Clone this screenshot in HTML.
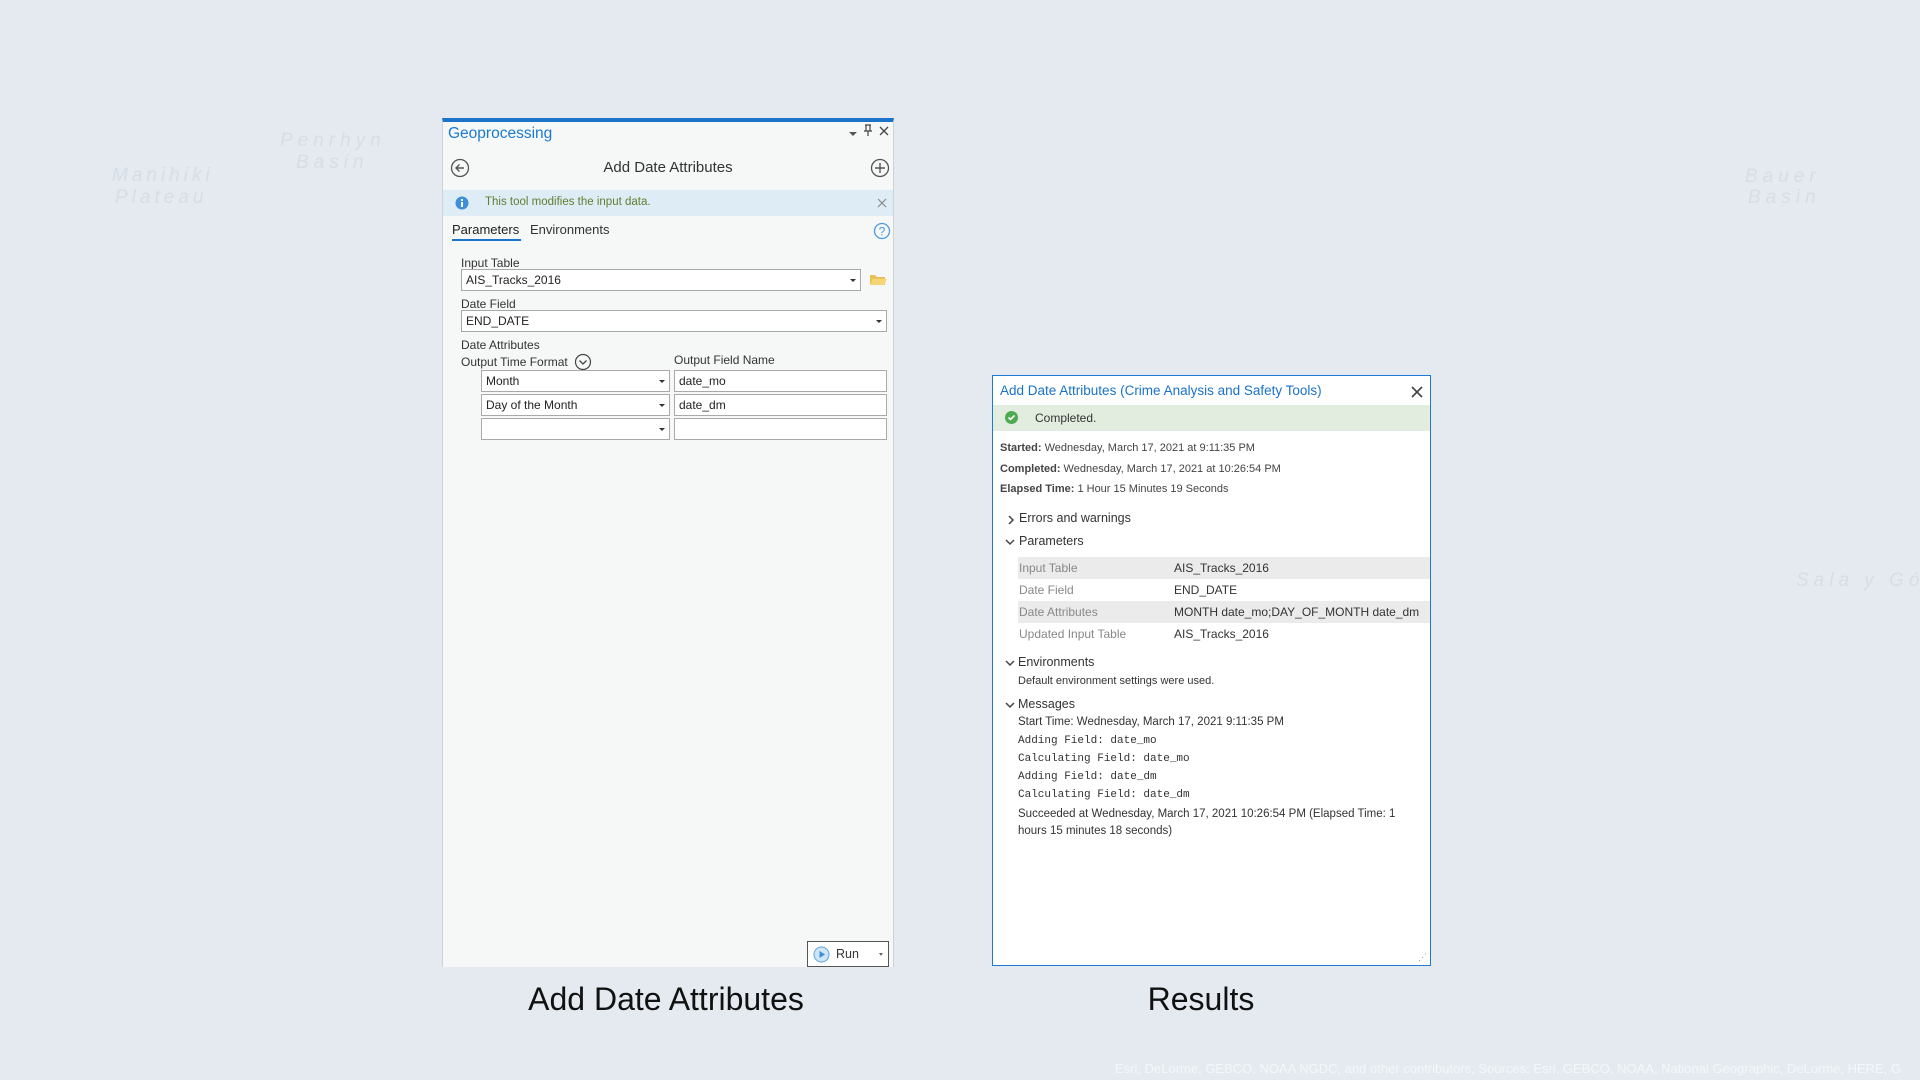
<!DOCTYPE html>
<html><head><meta charset="utf-8"><style>
*{margin:0;padding:0;box-sizing:border-box}
body{width:1920px;height:1080px;overflow:hidden;background:#e4eaf0;font-family:"Liberation Sans",sans-serif;position:relative;color:#222}
.a{position:absolute;white-space:nowrap}
.lp{position:absolute;left:442px;top:118px;width:452px;height:849px;background:#f6f7f7;border-top:4px solid #1c74c8;border-left:1px solid #cfd3d6;border-right:1px solid #cfd3d6}
.rp{position:absolute;left:992px;top:375px;width:439px;height:591px;background:#fff;border:1px solid #1c7ad0}
.box{position:absolute;background:#fff;border:1px solid #a9a9a9;font-size:12px;padding:3px 4px;color:#222}
.dd{position:absolute;right:4px;top:9px;border-left:3px solid transparent;border-right:3px solid transparent;border-top:3px solid #333}
.s{font-size:11px;color:#444}
.tb{position:absolute;left:1018px;width:412px;height:22px;font-size:12px;color:#888;padding:4px 0 0 1px}
.tb span{position:absolute;left:156px;color:#333}
.mono{font-family:"Liberation Mono",monospace;font-size:11px;color:#333}
.h{font-size:12.5px;color:#333}
.m{color:#d6dde5;font-size:19px;font-style:italic}
</style></head><body>
<div class="a m" style="left:280px;top:130px;letter-spacing:5px">Penrhyn</div>
<div class="a m" style="left:296px;top:152px;letter-spacing:5px">Basin</div>
<div class="a m" style="left:112px;top:165px;letter-spacing:4px">Manihiki</div>
<div class="a m" style="left:115px;top:187px;letter-spacing:4px">Plateau</div>
<div class="a m" style="left:1745px;top:166px;letter-spacing:5px">Bauer</div>
<div class="a m" style="left:1748px;top:187px;letter-spacing:5px">Basin</div>
<div class="a m" style="left:1796px;top:570px;letter-spacing:5px">Sala y Gó</div>

<div class="lp">
 <div class="a" style="left:5px;top:3px;font-size:15.5px;color:#1a7bd0">Geoprocessing</div>
 <div class="a" style="left:406px;top:10px;border-left:4px solid transparent;border-right:4px solid transparent;border-top:4px solid #555"></div>
 <svg class="a" style="left:420px;top:2px" width="10" height="12"><path d="M2 1h6M3 1v6M7 1v6M1 7h8M5 7v5" stroke="#444" stroke-width="1.2" fill="none"/></svg>
 <svg class="a" style="left:436px;top:4px" width="10" height="10"><path d="M1 1L9 9M9 1L1 9" stroke="#444" stroke-width="1.3"/></svg>
 <svg class="a" style="left:7px;top:36px" width="20" height="20"><circle cx="10" cy="10" r="8.5" fill="none" stroke="#555" stroke-width="1.3"/><path d="M14 10H6M9.5 6.5L6 10l3.5 3.5" fill="none" stroke="#555" stroke-width="1.4"/></svg>
 <div class="a" style="left:0;width:450px;text-align:center;top:37px;font-size:15px;color:#333">Add Date Attributes</div>
 <svg class="a" style="left:427px;top:36px" width="20" height="20"><circle cx="10" cy="10" r="8.5" fill="none" stroke="#555" stroke-width="1.3"/><path d="M10 5v10M5 10h10" stroke="#555" stroke-width="1.4"/></svg>
 <div class="a" style="left:0;top:68px;width:450px;height:26px;background:#deecf6"></div>
 <svg class="a" style="left:12px;top:74px" width="14" height="14"><circle cx="7" cy="7" r="6.5" fill="#3f8fd8"/><rect x="6" y="6" width="2" height="5" fill="#fff"/><rect x="6" y="3" width="2" height="2" fill="#fff"/></svg>
 <div class="a" style="left:42px;top:74px;font-size:11.5px;color:#5f7f2f">This tool modifies the input data.</div>
 <svg class="a" style="left:434px;top:76px" width="10" height="10"><path d="M1 1L9 9M9 1L1 9" stroke="#888" stroke-width="1.2"/></svg>
 <div class="a" style="left:9px;top:100px;font-size:13px;color:#222">Parameters</div>
 <div class="a" style="left:9px;top:117px;width:69px;height:2px;background:#1c74c8"></div>
 <div class="a" style="left:87px;top:100px;font-size:13px;color:#333">Environments</div>
 <svg class="a" style="left:430px;top:100px" width="18" height="18"><circle cx="9" cy="9" r="7.5" fill="none" stroke="#4a9be0" stroke-width="1.3"/><text x="9" y="13.5" font-size="12" text-anchor="middle" fill="#4a9be0" font-family="Liberation Sans">?</text></svg>
 <div class="a" style="left:18px;top:134px;font-size:12px;color:#333">Input Table</div>
 <div class="box" style="left:18px;top:147px;width:400px;height:22px">AIS_Tracks_2016<div class="dd"></div></div>
 <svg class="a" style="left:426px;top:150px" width="18" height="14"><path d="M1 3h5l2 2h8v8H1z" fill="#e8c15a"/><path d="M1 13l3-6h14l-3 6z" fill="#f6d674"/></svg>
 <div class="a" style="left:18px;top:175px;font-size:12px;color:#333">Date Field</div>
 <div class="box" style="left:18px;top:188px;width:426px;height:22px">END_DATE<div class="dd"></div></div>
 <div class="a" style="left:18px;top:216px;font-size:12px;color:#333">Date Attributes</div>
 <div class="a" style="left:18px;top:233px;font-size:12px;color:#333">Output Time Format</div>
 <svg class="a" style="left:131px;top:231px" width="18" height="18"><circle cx="9" cy="9" r="7.5" fill="none" stroke="#444" stroke-width="1.2"/><path d="M5.5 7.5L9 11l3.5-3.5" fill="none" stroke="#444" stroke-width="1.3"/></svg>
 <div class="a" style="left:231px;top:231px;font-size:12px;color:#333">Output Field Name</div>
 <div class="box" style="left:38px;top:248px;width:189px;height:22px">Month<div class="dd"></div></div>
 <div class="box" style="left:231px;top:248px;width:213px;height:22px">date_mo</div>
 <div class="box" style="left:38px;top:272px;width:189px;height:22px">Day of the Month<div class="dd"></div></div>
 <div class="box" style="left:231px;top:272px;width:213px;height:22px">date_dm</div>
 <div class="box" style="left:38px;top:296px;width:189px;height:22px"><div class="dd"></div></div>
 <div class="box" style="left:231px;top:296px;width:213px;height:22px"></div>
 <div class="a" style="left:364px;top:819px;width:82px;height:26px;border:1px solid #555;background:#fff"></div>
 <svg class="a" style="left:370px;top:824px" width="17" height="17"><circle cx="8.5" cy="8.5" r="7.5" fill="#cfe4f6" stroke="#5aa3de"/><path d="M6.5 5v7l5.5-3.5z" fill="#3a8fd8"/></svg>
 <div class="a" style="left:393px;top:825px;font-size:12.5px;color:#333">Run</div>
 <div class="a" style="left:436px;top:831px;border-left:2.5px solid transparent;border-right:2.5px solid transparent;border-top:3px solid #666"></div>
</div>

<div class="rp">
 <div class="a" style="left:7px;top:7px;font-size:13.5px;color:#1a72c8">Add Date Attributes (Crime Analysis and Safety Tools)</div>
 <svg class="a" style="left:418px;top:10px" width="12" height="12"><path d="M1 1L11 11M11 1L1 11" stroke="#444" stroke-width="1.6"/></svg>
 <div class="a" style="left:0;top:29px;width:437px;height:26px;background:#e2eddf"></div>
 <svg class="a" style="left:12px;top:35px" width="13" height="13"><circle cx="6.5" cy="6.5" r="6.5" fill="#4eaa50"/><path d="M3.5 6.5l2 2 4-4" fill="none" stroke="#fff" stroke-width="1.6"/></svg>
 <div class="a" style="left:42px;top:35px;font-size:12px;color:#333">Completed.</div>
 <div class="a s" style="left:7px;top:66px"><b>Started:</b> Wednesday, March 17, 2021 at 9:11:35 PM</div>
 <div class="a s" style="left:7px;top:87px"><b>Completed:</b> Wednesday, March 17, 2021 at 10:26:54 PM</div>
 <div class="a s" style="left:7px;top:107px"><b>Elapsed Time:</b> 1 Hour 15 Minutes 19 Seconds</div>
 <svg class="a" style="left:14px;top:139px" width="8" height="10"><path d="M2 1l4 4-4 4" fill="none" stroke="#444" stroke-width="1.5"/></svg>
 <div class="a h" style="left:26px;top:135px">Errors and warnings</div>
 <svg class="a" style="left:12px;top:162px" width="10" height="8"><path d="M1 2l4 4 4-4" fill="none" stroke="#444" stroke-width="1.5"/></svg>
 <div class="a h" style="left:26px;top:158px">Parameters</div>
</div>
<div class="tb" style="top:557px;background:#ebebeb">Input Table<span>AIS_Tracks_2016</span></div>
<div class="tb" style="top:579px">Date Field<span>END_DATE</span></div>
<div class="tb" style="top:601px;background:#ebebeb">Date Attributes<span>MONTH date_mo;DAY_OF_MONTH date_dm</span></div>
<div class="tb" style="top:623px">Updated Input Table<span>AIS_Tracks_2016</span></div>
<svg class="a" style="left:1005px;top:659px" width="10" height="8"><path d="M1 2l4 4 4-4" fill="none" stroke="#444" stroke-width="1.5"/></svg>
<div class="a h" style="left:1018px;top:655px">Environments</div>
<div class="a s" style="left:1018px;top:675px;color:#333">Default environment settings were used.</div>
<svg class="a" style="left:1005px;top:701px" width="10" height="8"><path d="M1 2l4 4 4-4" fill="none" stroke="#444" stroke-width="1.5"/></svg>
<div class="a h" style="left:1018px;top:697px">Messages</div>
<div class="a s" style="left:1018px;top:716px;color:#333;font-size:11.5px">Start Time: Wednesday, March 17, 2021 9:11:35 PM</div>
<div class="a mono" style="left:1018px;top:735px">Adding Field: date_mo</div>
<div class="a mono" style="left:1018px;top:753px">Calculating Field: date_mo</div>
<div class="a mono" style="left:1018px;top:771px">Adding Field: date_dm</div>
<div class="a mono" style="left:1018px;top:789px">Calculating Field: date_dm</div>
<div class="a s" style="left:1018px;top:808px;color:#333;font-size:11.5px">Succeeded at Wednesday, March 17, 2021 10:26:54 PM (Elapsed Time: 1</div>
<div class="a s" style="left:1018px;top:825px;color:#333;font-size:11.5px">hours 15 minutes 18 seconds)</div>
<div class="a" style="left:1418px;top:952px;font-size:9px;color:#999">⋰</div>

<div class="a" style="left:440px;width:452px;text-align:center;top:981px;font-size:32px;color:#111">Add Date Attributes</div>
<div class="a" style="left:1100px;width:202px;text-align:center;top:981px;font-size:32px;color:#111">Results</div>
<div class="a" style="left:1115px;top:1061px;font-size:13px;color:#f4f7fa">Esri, DeLorme, GEBCO, NOAA NGDC, and other contributors, Sources: Esri, GEBCO, NOAA, National Geographic, DeLorme, HERE, G</div>
</body></html>
